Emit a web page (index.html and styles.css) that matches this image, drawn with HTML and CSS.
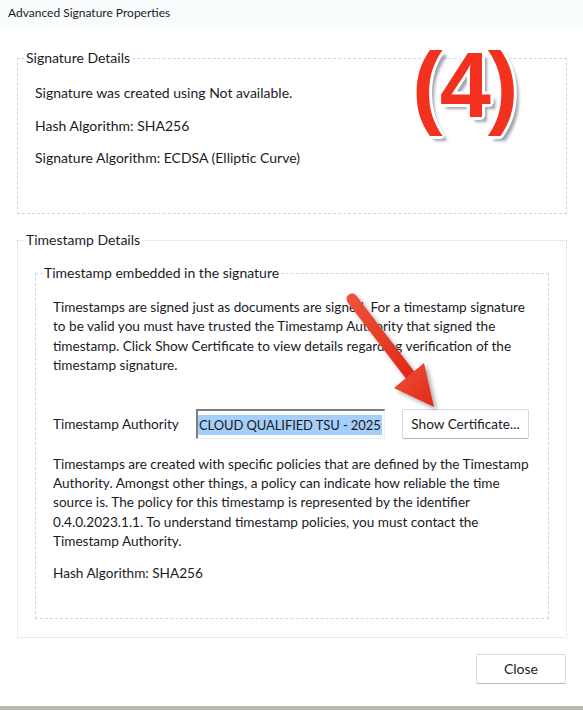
FILE: index.html
```html
<!DOCTYPE html>
<html>
<head>
<meta charset="utf-8">
<title>Advanced Signature Properties</title>
<link rel="stylesheet" href="styles.css">
</head>
<body>
<div class="window">
  <div class="titlebar">Advanced Signature Properties</div>
  <div class="content">
    <fieldset class="group sig">
      <legend>Signature Details</legend>
      <div class="group-body sig-body">
        <p>Signature was created using Not available.</p>
        <p>Hash Algorithm: SHA256</p>
        <p>Signature Algorithm: ECDSA (Elliptic Curve)</p>
      </div>
    </fieldset>
    <fieldset class="group ts">
      <legend>Timestamp Details</legend>
      <div class="group-body ts-body">
        <fieldset class="group inner">
          <legend>Timestamp embedded in the signature</legend>
          <div class="group-body inner-body">
            <p class="para">Timestamps are signed just as documents are signed. For a timestamp signature<br>to be valid you must have trusted the Timestamp Authority that signed the<br>timestamp. Click Show Certificate to view details regarding verification of the<br>timestamp signature.</p>
            <div class="auth-row">
              <span class="auth-label">Timestamp Authority</span>
              <div class="auth-field"><span class="sel">CLOUD QUALIFIED TSU - 2025</span></div>
              <button class="btn cert-btn">Show Certificate...</button>
            </div>
            <p class="para para2">Timestamps are created with specific policies that are defined by the Timestamp<br>Authority. Amongst other things, a policy can indicate how reliable the time<br>source is. The policy for this timestamp is represented by the identifier<br>0.4.0.2023.1.1. To understand timestamp policies, you must contact the<br>Timestamp Authority.</p>
            <p class="hash">Hash Algorithm: SHA256</p>
          </div>
        </fieldset>
      </div>
    </fieldset>
    <div class="footer">
      <button class="btn close-btn">Close</button>
    </div>
  </div>
  <div class="bottombar"></div>

  <div class="badge">(4)</div>
  <svg class="arrow" width="583" height="710" viewBox="0 0 583 710" xmlns="http://www.w3.org/2000/svg">
    <defs>
      <filter id="sh" x="-20%" y="-20%" width="150%" height="150%">
        <feDropShadow dx="3" dy="3" stdDeviation="2" flood-color="#707070" flood-opacity="0.6"/>
      </filter>
      <linearGradient id="rg" x1="0" y1="0" x2="1" y2="1">
        <stop offset="0" stop-color="#f0503a"/>
        <stop offset="1" stop-color="#e02a18"/>
      </linearGradient>
    </defs>
    <g filter="url(#sh)">
      <line x1="352" y1="299" x2="410" y2="375" stroke="url(#rg)" stroke-width="11" stroke-linecap="round"/>
      <polygon points="434,407 394,388 424,363" fill="url(#rg)"/>
    </g>
  </svg>
</div>
</body>
</html>
```

FILE: styles.css
```css
html, body {
  margin: 0;
  padding: 0;
  background: #ffffff;
}

.window {
  position: relative;
  width: 583px;
  height: 710px;
  overflow: hidden;
  font-family: Lato, "Open Sans", sans-serif;
  font-size: 13.6px;
  color: #1b1b1f;
  background: #ffffff;
}

.titlebar {
  height: 26px;
  line-height: 26px;
  padding-left: 8px;
  font-size: 12px;
  background: #f8fcfc;
  color: #1b1b1b;
}

.content {
  padding: 0 16px 0 17px;
}

.group {
  margin: 0;
  padding: 0;
  border: 1px dashed #d4d4f2;
  min-width: 0;
}

.group legend {
  margin-left: 6px;
  padding: 0 2px;
  line-height: 18px;
  font-size: 14px;
}

.group-body p {
  margin: 0;
}

.sig {
  margin-top: 23px;
}

.sig-body {
  display: flex;
  flex-direction: column;
  gap: 12.5px;
  padding: 16px 17px 45px 17px;
  line-height: 20px;
  font-size: 14px;
}

.ts {
  margin-top: 17px;
  border-style: dotted;
}

.ts-body {
  padding: 15px 17px 18px 17px;
}

.inner-body {
  padding: 16px 17px 35px 17px;
}

.para {
  line-height: 19.3px;
  white-space: nowrap;
}

.auth-row {
  display: flex;
  align-items: center;
  margin-top: 34px;
  height: 30px;
}

.auth-label {
  width: 143px;
}

.auth-field {
  width: 189px;
  height: 30px;
  border-top: 2px solid #7e7e7e;
  border-left: 2px solid #7e7e7e;
  border-right: 1px dotted #d8d8ee;
  border-bottom: 1px dotted #d8d8ee;
  display: flex;
  align-items: center;
  padding-left: 0;
  box-sizing: border-box;
  margin-right: 17px;
  overflow: hidden;
}

.sel {
  background: #a5cef8;
  line-height: 20px;
  font-size: 13px;
  letter-spacing: -0.1px;
  padding: 0 1px;
  white-space: nowrap;
}

.btn {
  font-family: Lato, "Open Sans", sans-serif;
  font-size: 13.6px;
  color: #1b1b1f;
  background: #ffffff;
  border: 1px solid #d6d6f0;
  border-bottom-color: #b8b8b0;
  border-radius: 2px;
  height: 30px;
  padding: 0;
  box-sizing: border-box;
}

.cert-btn {
  width: 127px;
}

.para2 {
  margin-top: 15.5px !important;
}

.hash {
  margin-top: 12.5px !important;
  line-height: 19.3px;
}

.footer {
  display: flex;
  justify-content: flex-end;
  margin-top: 16px;
  padding-right: 1px;
}

.close-btn {
  width: 90px;
  font-size: 14px;
}

.bottombar {
  position: absolute;
  left: 0;
  right: 0;
  bottom: 0;
  height: 4px;
  background: #b9b9b2;
}

.badge {
  position: absolute;
  left: 412px;
  top: 30px;
  font-family: "Liberation Sans", Arial, sans-serif;
  font-weight: bold;
  font-size: 92px;
  line-height: 110px;
  color: #f2321f;
  letter-spacing: -3px;
  text-shadow:
    3px 0 0 #fff, -3px 0 0 #fff, 0 3px 0 #fff, 0 -3px 0 #fff,
    2px 2px 0 #fff, -2px -2px 0 #fff, 2px -2px 0 #fff, -2px 2px 0 #fff,
    5px 5px 3px rgba(90, 90, 110, 0.55);
}

.arrow {
  position: absolute;
  left: 0;
  top: 0;
  pointer-events: none;
}
```
